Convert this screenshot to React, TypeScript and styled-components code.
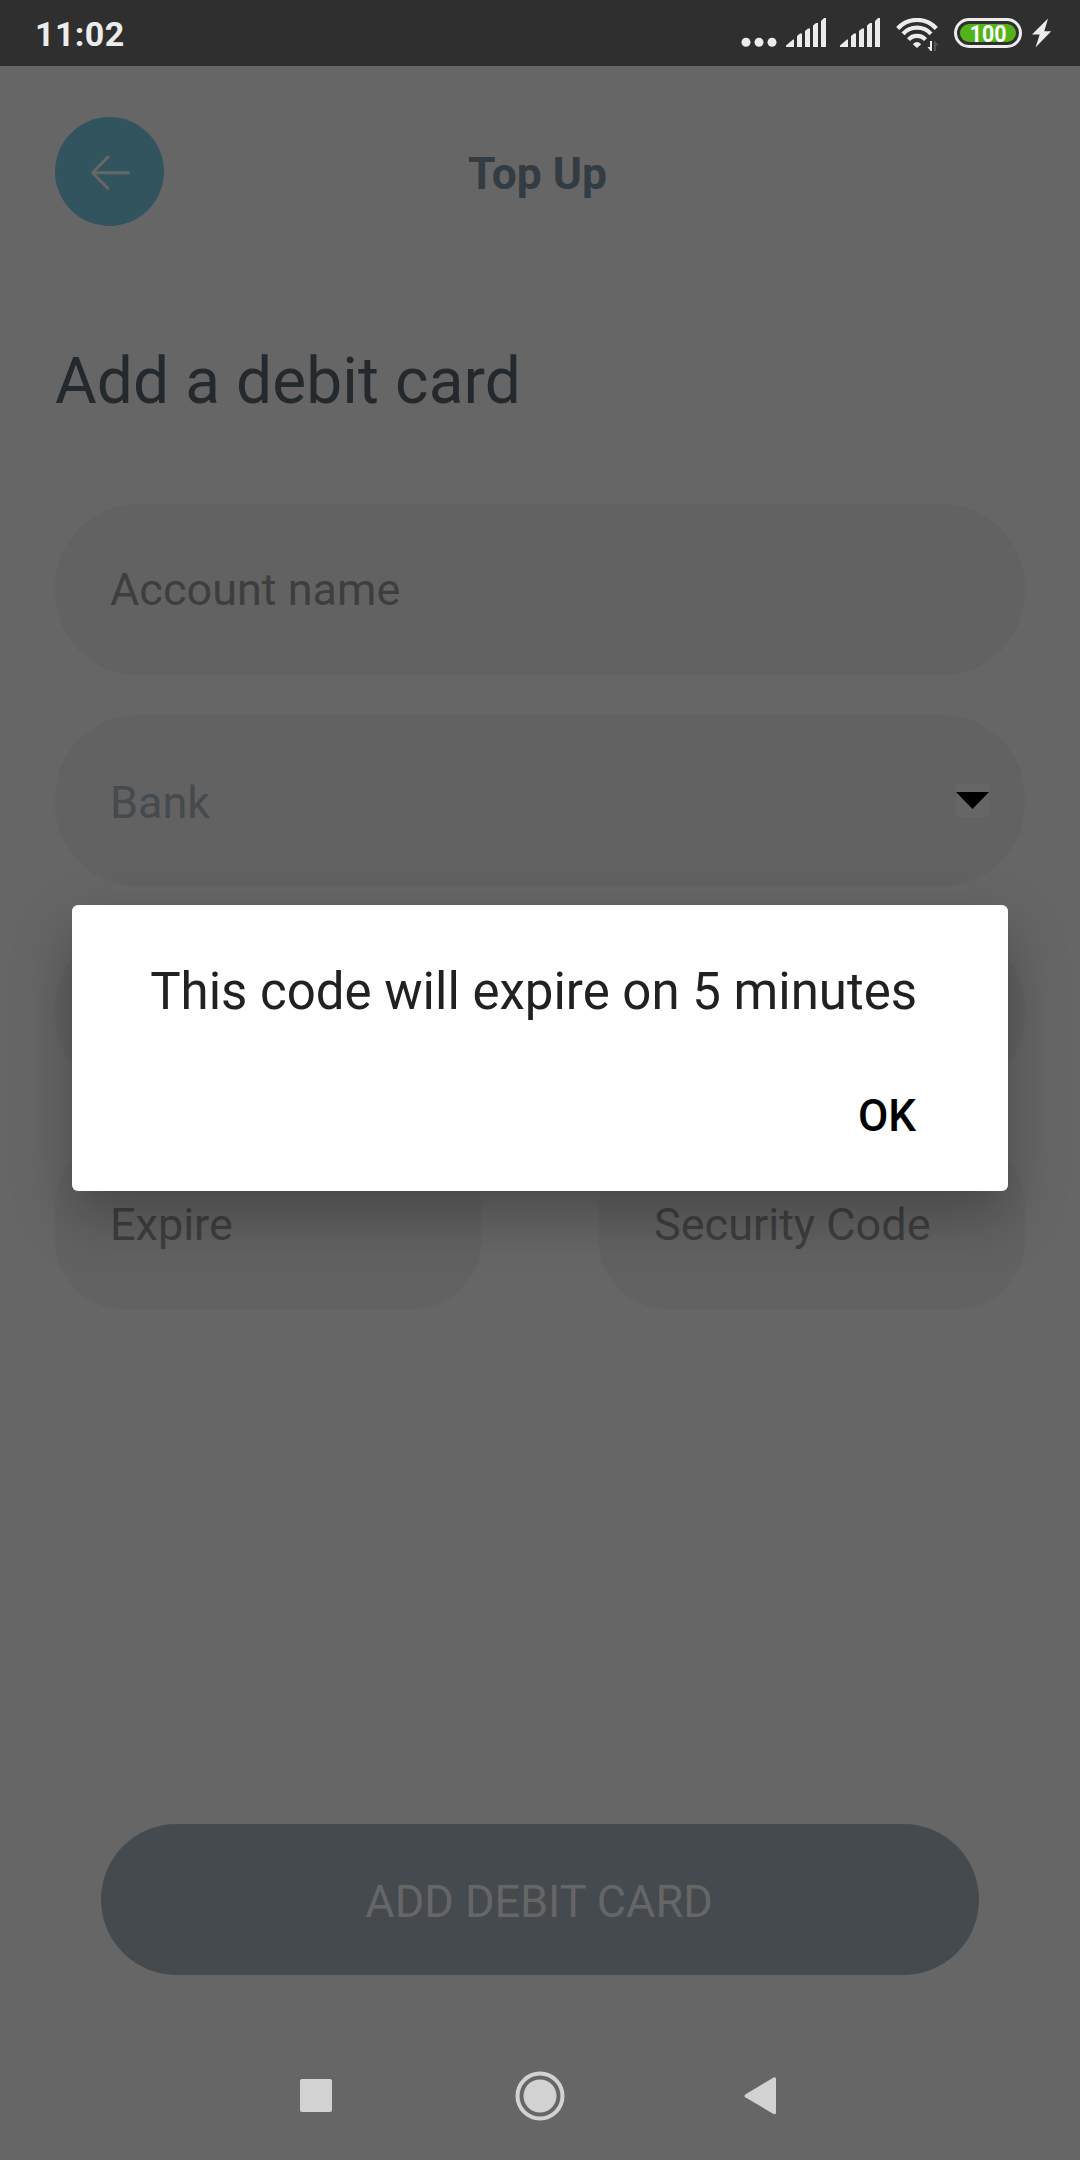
import React from "react";
import styled, { createGlobalStyle } from "styled-components";

const GlobalStyle = createGlobalStyle`
  * { box-sizing: border-box; }
  body { margin: 0; background: #666666; font-family: Roboto, "Noto Sans", sans-serif; }
`;

const Screen = styled.div`
  position: relative;
  display: flex;
  flex-direction: column;
  width: 1080px;
  height: 2160px;
  background: #666666;
  overflow: hidden;
`;

const StatusBar = styled.div`
  display: flex;
  justify-content: space-between;
  height: 66px;
  padding: 0 28px 0 35px;
  background: #2f2f2f;
  color: #ececec;
`;

const Clock = styled.div`
  padding-top: 1px;
  font-size: 34px;
  line-height: 66px;
  font-weight: 700;
  letter-spacing: 0.4px;
`;

const StatusIcons = styled.div`
  display: flex;
  align-items: flex-start;
  padding-top: 18px;
`;

const Dots = styled.svg`
  width: 36px;
  height: 30px;
  margin-right: 9px;
`;

const Signal = styled.svg`
  width: 41px;
  height: 30px;
  margin-right: 13px;
`;

const Wifi = styled.svg`
  width: 44px;
  height: 34px;
  margin: 0 14px 0 2px;
`;

const Battery = styled.div`
  display: flex;
  width: 68px;
  height: 30px;
  padding: 2.7px;
  border: 3px solid #ececec;
  border-radius: 15px;
`;

const Charge = styled.div`
  display: flex;
  flex: 1;
  justify-content: center;
  border-radius: 10px;
  background: #52b41a;
`;

const ChargeValue = styled.span`
  color: #ffffff;
  font-size: 24.5px;
  font-weight: 700;
  line-height: 19px;
  transform: scaleX(0.87);
`;

const Bolt = styled.svg`
  width: 20px;
  height: 30px;
  margin-left: 10px;
`;

const Header = styled.header`
  display: grid;
  grid-template-columns: 109px 1fr 109px;
  align-items: center;
  margin-top: 51px;
  padding: 0 60px 0 55px;
  height: 109px;
`;

const BackButton = styled.button`
  width: 109px;
  height: 109px;
  padding: 0;
  border: none;
  border-radius: 50%;
  background: #32545e;
`;

const Title = styled.h1`
  margin: 0;
  padding-top: 5px;
  color: #333c42;
  font-size: 44.4px;
  line-height: 52px;
  font-weight: 700;
  text-align: center;
`;

const Heading = styled.h2`
  margin: 118px 55px 0;
  color: #23292d;
  font-size: 64px;
  line-height: 76px;
  font-weight: 400;
  letter-spacing: 0.1px;
`;

const Form = styled.form`
  display: flex;
  flex-direction: column;
  gap: 40px;
  margin: 84px 55px 0;
`;

const Row = styled.div`
  display: flex;
  justify-content: space-between;
  margin-top: 1px;
`;

const Field = styled.div<{ $half?: boolean; $tone?: string; $shift?: number }>`
  display: flex;
  align-items: center;
  justify-content: space-between;
  width: ${(p) => (p.$half ? "426px" : "100%")};
  height: 171px;
  padding: ${(p) => p.$shift ?? 0}px 36px 0 55px;
  border-radius: ${(p) => (p.$half ? 69 : 83)}px;
  background: #626262;
  color: ${(p) => p.$tone ?? "#3e3e3e"};
  font-size: 45px;
  line-height: 52px;
`;

const CaretBox = styled.span`
  display: flex;
  align-items: center;
  width: 33px;
  height: 33px;
  margin-bottom: 5px;
  background: #666666;
`;

const SubmitButton = styled.button`
  width: 878px;
  height: 151px;
  margin: auto auto 185px;
  padding: 5px 2px 0 0;
  border: none;
  border-radius: 76px;
  background: #454a4e;
  color: #666666;
  font-family: inherit;
  font-size: 45px;
  line-height: 52px;
`;

const NavBar = styled.nav`
  position: absolute;
  left: 0;
  right: 0;
  bottom: 0;
  display: flex;
  justify-content: space-between;
  align-items: center;
  height: 129px;
  padding: 0 303px 0 299px;
`;

const NavIcon = styled.svg<{ $w: number }>`
  width: ${(p) => p.$w}px;
  height: 50px;
  fill: #d2d2d2;
  overflow: visible;
`;

const Dialog = styled.div`
  position: absolute;
  top: 905px;
  left: 72px;
  display: flex;
  flex-direction: column;
  align-items: flex-end;
  width: 936px;
  height: 286px;
  padding: 57px 91px 0 0;
  border-radius: 6px;
  background: #ffffff;
  box-shadow: 0 24px 60px rgba(0, 0, 0, 0.28);
`;

const Message = styled.p`
  margin: 0;
  color: #212121;
  font-size: 51px;
  line-height: 60px;
  white-space: nowrap;
`;

const OkButton = styled.button`
  margin: 68px 1px 0 0;
  padding: 0;
  border: none;
  background: none;
  color: #000000;
  font-family: inherit;
  font-size: 44px;
  line-height: 52px;
  font-weight: 500;
`;

const SignalIcon = () => (
  <Signal viewBox="0 0 41 30" fill="#ececec">
    <path d="M0 29V27.5L7 21.5H8V29ZM11 29V18L14 15.5H16V29ZM19 29V13L22 10.5H24V29ZM27 29V7.5L30 5H32V29ZM35 29V3L38 0H40V29Z" />
  </Signal>
);

export default function App() {
  return (
    <Screen>
      <GlobalStyle />
      <StatusBar>
        <Clock>11:02</Clock>
        <StatusIcons>
          <Dots viewBox="0 0 36 30" fill="#ececec">
            <circle cx="5" cy="24.3" r="4.5" />
            <circle cx="18" cy="24.3" r="4.5" />
            <circle cx="31" cy="24.3" r="4.5" />
          </Dots>
          <SignalIcon />
          <SignalIcon />
          <Wifi viewBox="0 0 44 34" fill="none" stroke="#ececec" strokeWidth="4.2">
            <path d="M1.7 10.5A26 26 0 0 1 40.3 10.5" />
            <path d="M7 15.8A19 19 0 0 1 35 15.8" />
            <path d="M12.5 21.6A11.5 11.5 0 0 1 29.5 21.6" />
            <path d="M16.8 26.2Q21 21.600 25.200 26.200L21 30Z" fill="#ececec" stroke="none" />
            <path d="M36 23V33H34.5L31.5 29H34V23Z" fill="#ececec" stroke="none" />
            <path d="M38 33V23H39L42.5 27.5H40V33Z" fill="#555555" stroke="none" />
          </Wifi>
          <Battery>
            <Charge>
              <ChargeValue>100</ChargeValue>
            </Charge>
          </Battery>
          <Bolt viewBox="0 0 20 30" fill="#ececec">
            <path d="M16 0.5L0 16.5H7.7L3.5 29.5L19.2 13.3H12.3Z" />
          </Bolt>
        </StatusIcons>
      </StatusBar>

      <Header>
        <BackButton aria-label="Back">
          <svg width="109" height="109" viewBox="0 0 109 109" fill="none" stroke="#666666" strokeWidth="3" strokeLinecap="round" strokeLinejoin="round">
            <path d="M73.5 55.7H37.5M53 40L37.5 55.7L53 71.5" />
          </svg>
        </BackButton>
        <Title>Top Up</Title>
      </Header>

      <Heading>Add a debit card</Heading>

      <Form>
        <Field>Account name</Field>
        <Field $tone="#454a4e" $shift={5}>
          Bank
          <CaretBox>
            <svg width="33" height="17" viewBox="0 0 33 17">
              <path d="M0 0H33L16.5 17Z" />
            </svg>
          </CaretBox>
        </Field>
        <Field />
        <Row>
          <Field $half $shift={2}>Expire</Field>
          <Field $half $shift={2}>Security Code</Field>
        </Row>
      </Form>

      <SubmitButton>ADD DEBIT CARD</SubmitButton>

      <NavBar>
        <NavIcon $w={34} viewBox="0 0 34 50">
          <rect x="1" y="8" width="32" height="33" rx="2" />
        </NavIcon>
        <NavIcon $w={50} viewBox="0 0 50 50">
          <circle cx="26" cy="25" r="22.5" fill="none" stroke="#d2d2d2" strokeWidth="4" />
          <circle cx="26" cy="25" r="16.5" />
        </NavIcon>
        <NavIcon $w={33} viewBox="0 0 33 50">
          <path d="M1.2 23.5L29.5 6.5Q32 5.500 32 8V41.500Q32 44 29.500 43L1.200 26.200Q-0.200 25 1.200 23.500Z" />
        </NavIcon>
      </NavBar>

      <Dialog role="dialog">
        <Message>This code will expire on 5 minutes</Message>
        <OkButton>OK</OkButton>
      </Dialog>
    </Screen>
  );
}
